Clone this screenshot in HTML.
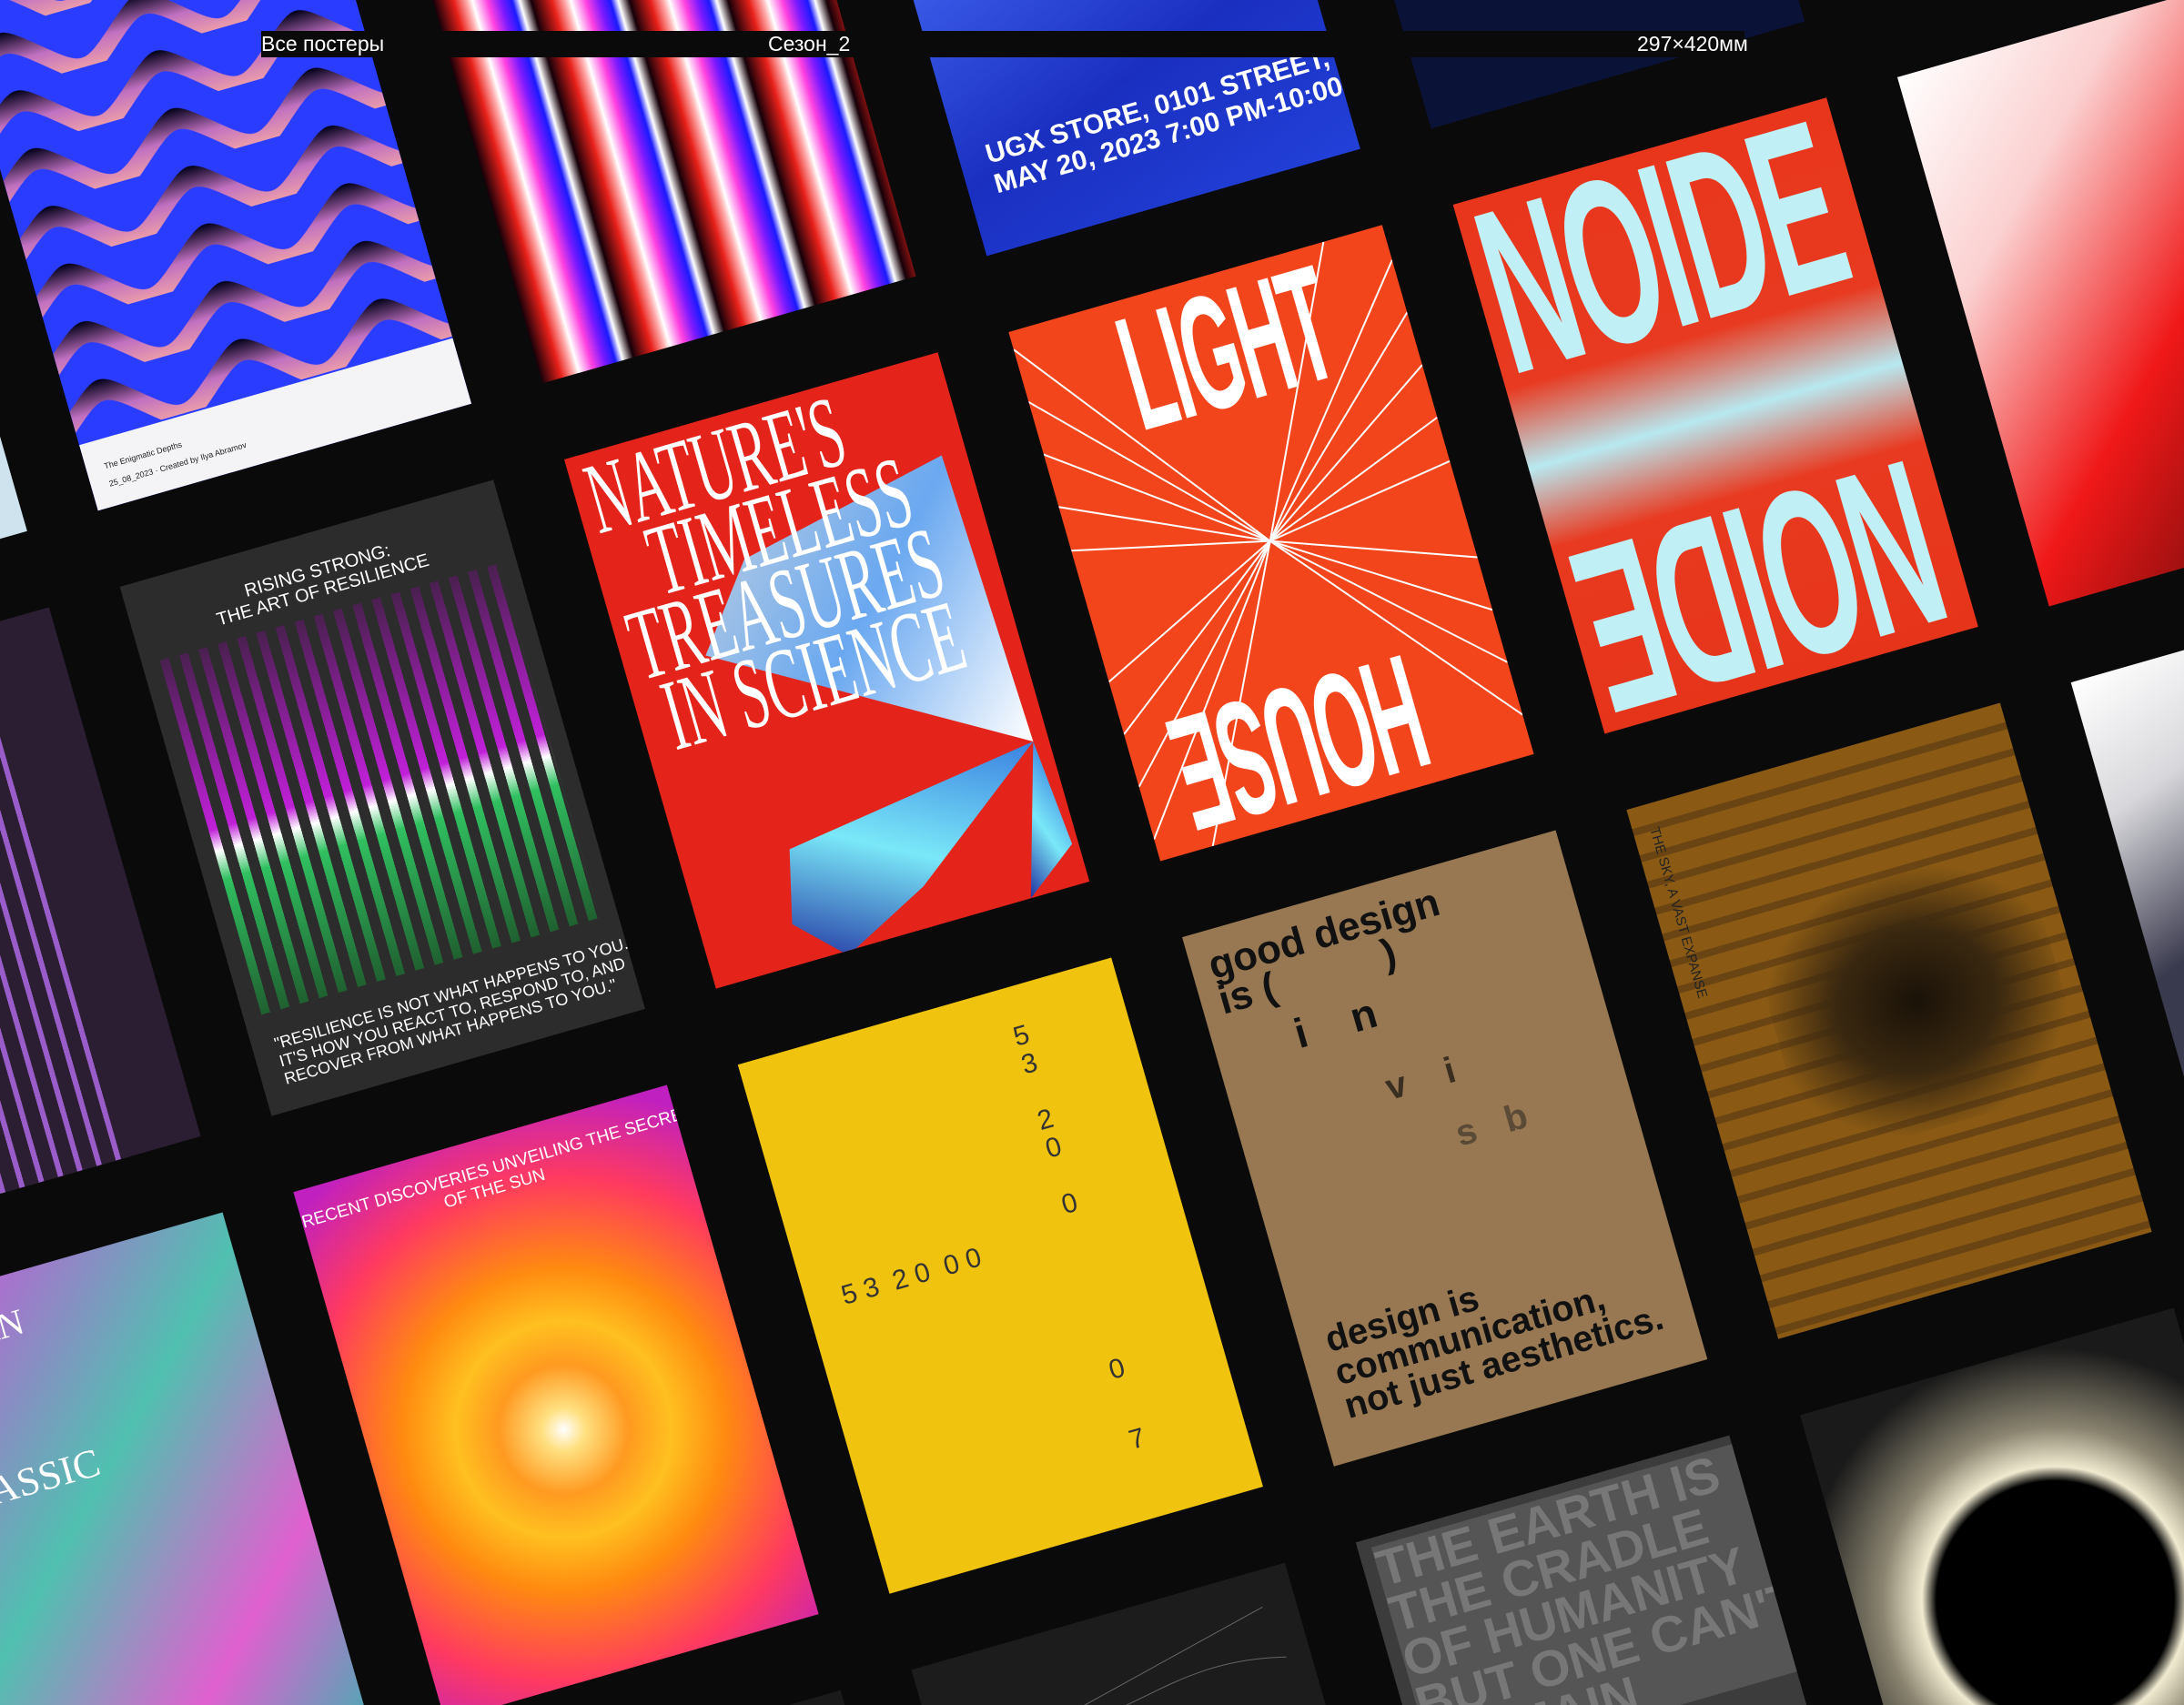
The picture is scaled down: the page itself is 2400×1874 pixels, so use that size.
<!DOCTYPE html>
<html><head><meta charset="utf-8"><style>
*{margin:0;padding:0;box-sizing:border-box}
html,body{width:2400px;height:1874px;overflow:hidden;background:#0a0a0a;font-family:"Liberation Sans",sans-serif}
#w{position:relative;width:2400px;height:1874px;overflow:hidden;background:#0a0a0a;clip-path:inset(0)}
#g{position:absolute;left:620px;top:505px;transform:rotate(-16deg);transform-origin:0 0}
.p{position:absolute;width:427px;height:605px;overflow:hidden}
.t{position:absolute;white-space:nowrap}
#bar{position:absolute;left:287px;top:34px;width:1630px;height:29px;background:#0a0a0a;color:#fff;font-size:23px;line-height:29px}
#bar span{position:absolute;top:0}
</style></head><body><div id="w">
<div id="g">
<!-- row -1 -->
<div class="p" style="left:-1016px;top:-692px;background:#cfe3ee"></div>
<div class="p" style="left:-508px;top:-692px;background:#2a3cff">
 <svg width="427" height="605" style="position:absolute;left:0;top:0"><defs>
 <linearGradient id="wv" x1="0" y1="0" x2="0" y2="1"><stop offset="0" stop-color="#000018"/><stop offset=".45" stop-color="#c070c0"/><stop offset="1" stop-color="#ffb0a0"/></linearGradient>
 <pattern id="wp" width="160" height="66" patternUnits="userSpaceOnUse"><rect width="160" height="66" fill="#2a3cff"/><path d="M0 30 C40 -4 40 -4 80 30 C120 64 120 64 160 30 L160 54 C120 88 120 88 80 54 C40 20 40 20 0 54Z" fill="url(#wv)"/></pattern></defs>
 <rect width="427" height="530" fill="url(#wp)"/></svg>
 <div style="position:absolute;left:0;right:0;bottom:0;height:75px;background:#f4f4f6"></div>
 <div class="t" style="left:20px;bottom:40px;font-size:9px;color:#222">The Enigmatic Depths</div>
 <div class="t" style="left:20px;bottom:20px;font-size:9px;color:#222">25_08_2023 · Created by Ilya Abramov</div>
</div>
<div class="p" style="left:0;top:-692px;background:repeating-linear-gradient(90deg,#160008 0,#e8201a 22px,#ffb0b0 36px,#fff 42px,#ff40e0 58px,#7a1aff 72px,#1a1aff 84px,#fff 92px,#160008 104px)"></div>
<div class="p" style="left:508px;top:-692px;background:linear-gradient(160deg,#1a2aa0,#3a5ae8 40%,#1a2fc0 70%,#2240d8)">
 <div class="t" style="left:30px;bottom:55px;color:#fff;font-size:30px;font-weight:bold;line-height:34px">UGX STORE, 0101 STREET, CITY<br>MAY 20, 2023 7:00 PM-10:00 PM</div>
</div>
<div class="p" style="left:1016px;top:-692px;background:#0b1238"></div>
<!-- row 0 -->
<div class="p" style="left:-1016px;top:0;background:#2b1e33">
 <div style="position:absolute;left:0;right:80px;top:120px;bottom:0;background:repeating-linear-gradient(90deg,#9a5cc8 0 6px,#2b1e33 6px 22px)"></div>
</div>
<div class="p" style="left:-508px;top:0;background:#2c2c2c">
 <div style="position:absolute;left:20px;right:20px;top:90px;bottom:110px;background:repeating-linear-gradient(90deg,transparent 0 10px,#2c2c2c 10px 22px),linear-gradient(180deg,#4a2050,#c020d8 48%,#fff 54%,#30c060 62%,#206030)"></div>
 <div class="t" style="left:0;right:0;top:32px;text-align:center;color:#fff;font-size:20px;line-height:22px">RISING STRONG:<br>THE ART OF RESILIENCE</div>
 <div class="t" style="left:25px;bottom:25px;color:#fff;font-size:18px;line-height:20px">"RESILIENCE IS NOT WHAT HAPPENS TO YOU.<br>IT'S HOW YOU REACT TO, RESPOND TO, AND<br>RECOVER FROM WHAT HAPPENS TO YOU."</div>
</div>
<div class="p" style="left:0;top:0;background:#e4241a">
 <svg width="427" height="605" style="position:absolute;left:0;top:0"><defs><linearGradient id="a" x1="0" y1="0" x2="1" y2="1"><stop offset="0" stop-color="#c0d0e0"/><stop offset=".5" stop-color="#6aa8f0"/><stop offset="1" stop-color="#fff"/></linearGradient><linearGradient id="b" x1="0" y1="1" x2="1" y2="0"><stop offset="0" stop-color="#2030a0"/><stop offset=".5" stop-color="#7ae8f8"/><stop offset="1" stop-color="#3a80e0"/></linearGradient></defs>
 <polygon points="160,160 400,110 410,440 90,250" fill="url(#a)"/><polygon points="120,480 410,440 250,560 150,610 100,560" fill="url(#b)"/><polygon points="410,440 420,560 360,605" fill="url(#b)"/></svg>
 <div class="t" style="left:14px;top:10px;color:#fff;font-family:'Liberation Serif',serif;font-size:112px;line-height:84px;transform:scaleX(.55);transform-origin:0 0">NATURE'S<br>&nbsp;&nbsp;&nbsp;TIMELESS<br>TREASURES<br>&nbsp;IN SCIENCE</div>
</div>
<div class="p" style="left:508px;top:0;background:#f2451b">
 <svg width="427" height="605" style="position:absolute;left:0;top:0" stroke="#fff" stroke-width="2"><g>
 <line x1="213" y1="300" x2="0" y2="20"/><line x1="213" y1="300" x2="0" y2="80"/><line x1="213" y1="300" x2="0" y2="140"/><line x1="213" y1="300" x2="0" y2="200"/><line x1="213" y1="300" x2="0" y2="250"/><line x1="213" y1="300" x2="427" y2="40"/><line x1="213" y1="300" x2="427" y2="100"/><line x1="213" y1="300" x2="427" y2="160"/><line x1="213" y1="300" x2="427" y2="220"/><line x1="213" y1="300" x2="427" y2="270"/><line x1="213" y1="300" x2="0" y2="580"/><line x1="213" y1="300" x2="0" y2="520"/><line x1="213" y1="300" x2="0" y2="460"/><line x1="213" y1="300" x2="0" y2="400"/><line x1="213" y1="300" x2="427" y2="560"/><line x1="213" y1="300" x2="427" y2="500"/><line x1="213" y1="300" x2="427" y2="440"/><line x1="213" y1="300" x2="427" y2="380"/><line x1="213" y1="300" x2="60" y2="605"/><line x1="213" y1="300" x2="360" y2="0"/></g></svg>
 <div class="t" style="left:110px;top:-20px;color:#fff;font-size:180px;font-weight:bold;transform:scaleX(.45);transform-origin:0 0;letter-spacing:-6px">LIGHT</div>
 <div class="t" style="left:60px;bottom:-20px;width:360px;text-align:center;color:#fff;font-size:180px;font-weight:bold;letter-spacing:-6px;transform:rotate(180deg) scaleX(.45)">HOUSE</div>
</div>
<div class="p" style="left:1016px;top:0;background:linear-gradient(180deg,#e8361c 0,#e83a20 35%,#b8e8f0 50%,#e83a20 65%,#e6341a)">
 <div class="t" style="left:10px;top:-40px;color:#c0f0f6;font-size:260px;font-weight:bold;letter-spacing:-8px;transform:scaleX(.5);transform-origin:0 0">NOIDE</div>
 <div class="t" style="left:-200px;bottom:-40px;width:820px;text-align:center;color:#c0f0f6;font-size:260px;font-weight:bold;letter-spacing:-8px;transform:scaleX(.5) rotate(180deg)">NOIDE</div>
</div>
<div class="p" style="left:1524px;top:0;background:linear-gradient(135deg,#fff 0,#fbd0d0 25%,#f01818 55%,#5a0a0a 90%)"></div>
<!-- row 1 -->
<div class="p" style="left:-1016px;top:692px;background:linear-gradient(135deg,#e040e0,#50c0b0 45%,#e060d0 75%,#40b0b0)">
 <div class="t" style="left:40px;top:200px;color:#fff;font-family:'Liberation Serif',serif;font-size:44px">CLASSIC</div>
 <div class="t" style="left:10px;top:30px;color:#fff;font-family:'Liberation Serif',serif;font-size:40px">MODERN</div>
</div>
<div class="p" style="left:-508px;top:692px;background:radial-gradient(circle at 50% 55%,#fff 0,#ffe080 6%,#ff9a20 18%,#ffc020 30%,#ff8a10 45%,#ff3a60 70%,#c020c0 95%)">
 <div class="t" style="left:0;right:0;top:25px;text-align:center;color:#fff;font-size:19px;line-height:22px">RECENT DISCOVERIES UNVEILING THE SECRETS<br>OF THE SUN</div>
</div>
<div class="p" style="left:0;top:692px;background:#f0c30f;color:#333;font-size:30px">
 <div class="t" style="left:300px;top:40px;line-height:32px">5<br>3<br><br>2<br>0<br><br>0</div>
 <div class="t" style="left:40px;top:260px">5 3 &nbsp;2 0 &nbsp;0 0</div>
 <div class="t" style="left:300px;top:420px">0</div>
 <div class="t" style="left:300px;top:500px">7</div>
</div>
<div class="p" style="left:508px;top:692px;background:#977852;color:#111;font-weight:bold">
 <div class="t" style="left:20px;top:20px;font-size:44px;line-height:40px">good design<br>is (&nbsp;&nbsp;&nbsp;&nbsp;&nbsp;&nbsp;&nbsp;&nbsp;&nbsp;&nbsp;)</div>
 <div class="t" style="left:90px;top:110px;font-size:46px">i &nbsp;&nbsp;&nbsp;n</div>
 <div class="t" style="left:170px;top:200px;font-size:40px;color:#3a2e20">v &nbsp;&nbsp;&nbsp;i</div>
 <div class="t" style="left:230px;top:270px;font-size:40px;color:#5a4a36">s &nbsp;&nbsp;b</div>
 <div class="t" style="left:30px;bottom:40px;font-size:40px;line-height:38px">design is<br>communication,<br>not just aesthetics.</div>
</div>
<div class="p" style="left:1016px;top:692px;background:repeating-linear-gradient(180deg,#8a5a14 0 22px,#6a4412 22px 30px)">
 <div style="position:absolute;left:90px;right:20px;top:150px;height:280px;background:radial-gradient(ellipse at 50% 50%,#1a1208 0,#3a2810 40%,transparent 75%)"></div>
 <div class="t" style="left:15px;top:10px;color:#222;font-size:15px;transform:rotate(90deg);transform-origin:0 100%">THE SKY, A VAST EXPANSE</div>
</div>
<div class="p" style="left:1524px;top:692px;background:linear-gradient(160deg,#fff 0,#d8d8dc 20%,#3a3a4e 45%)"></div>
<!-- row 2 -->
<div class="p" style="left:-508px;top:1384px;background:#1a1a1a"></div>
<div class="p" style="left:0;top:1384px;background:#1c1c1c"><svg width="427" height="605" style="position:absolute" stroke="#666" fill="none"><path d="M40 80 C200 150 250 60 400 100"/><path d="M40 120 L390 40"/></svg></div>
<div class="p" style="left:508px;top:1384px;background:#3c3c3c">
 <div class="t" style="left:15px;top:10px;color:#777;font-size:56px;font-weight:bold;line-height:52px;background:#555">THE EARTH IS<br>THE CRADLE<br>OF HUMANITY<br>BUT ONE CAN'T<br>&nbsp;REMAIN</div>
</div>
<div class="p" style="left:1016px;top:1384px;background:radial-gradient(circle at 50% 45%,#000 0,#000 33%,#f0ead0 37%,#8a8470 48%,#1a1a1a 70%)"></div>
</div>
<div id="bar"><span style="left:0">Все постеры</span><span style="left:557px">Сезон_2</span><span style="left:1512px">297×420мм</span></div>
</div></body></html>
